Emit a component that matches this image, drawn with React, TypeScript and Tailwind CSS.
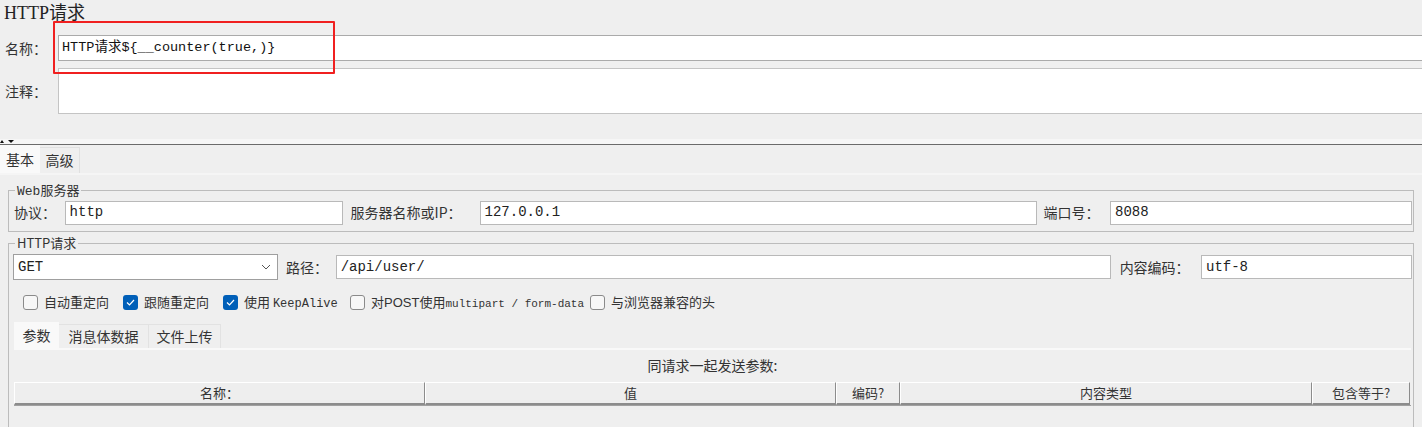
import React from "react";

const cjk = '"Noto Sans CJK SC", "Noto Sans", sans-serif';
const mono = '"Liberation Mono", "Noto Sans CJK SC", monospace';

function Field({ w, value, h = 24 }: { w: number; value: string; h?: number }) {
  return (
    <div
      className="flex items-center bg-white border border-[#b9b9b9] pl-[4px] text-[14px] text-[#222] shrink-0"
      style={{ width: w, height: h, fontFamily: mono }}
    >
      {value}
    </div>
  );
}

function Check({ checked, children }: { checked?: boolean; children: React.ReactNode }) {
  return (
    <div className="flex items-center gap-[6px] text-[13px] text-[#333] whitespace-nowrap">
      {checked ? (
        <div className="w-[15px] h-[15px] rounded-[3px] bg-[#005fb8] flex items-center justify-center shrink-0">
          <svg width="9" height="7" viewBox="0 0 9 7">
            <path d="M1 3.5 L3.5 6 L8 1" stroke="white" strokeWidth="1.2" fill="none" />
          </svg>
        </div>
      ) : (
        <div className="w-[15px] h-[15px] rounded-[3px] border border-[#8a8a8a] bg-[#f7f7f7] shrink-0" />
      )}
      <span style={{ fontFamily: cjk }}>{children}</span>
    </div>
  );
}

function HeadCell({ w, children }: { w: number; children: React.ReactNode }) {
  return (
    <div
      className="h-[23px] flex items-center justify-center border-t border-l border-t-white border-l-white border-r border-b-2 border-r-[#8c8c8c] border-b-[#8c8c8c] bg-[#eeeeee] text-[13px] text-[#333] shrink-0"
      style={{ width: w, fontFamily: cjk }}
    >
      {children}
    </div>
  );
}

export default function App() {
  return (
    <div className="relative w-[1422px] h-[427px] overflow-hidden bg-[#efefef]" style={{ fontFamily: cjk }}>
      {/* Title */}
      <div className="h-[28px] pl-[4px] pt-[1px] text-[18px] leading-[24px] text-[#222]" style={{ fontFamily: '"Liberation Serif", "Noto Sans CJK SC", serif' }}>
        HTTP请求
      </div>
      {/* name */}
      <div className="flex items-center h-[26px] mt-[7px]">
        <div className="w-[58px] pl-[5px] text-[14px] text-[#333]">名称：</div>
        <div
          className="flex-1 h-[26px] bg-white border border-[#aaaaaa] border-r-0 flex items-center pl-[3px] text-[13.5px] text-[#111]"
          style={{ fontFamily: mono }}
        >
          HTTP请求$&#123;__counter(true,)&#125;
        </div>
      </div>
      {/* comment */}
      <div className="flex h-[46px] mt-[7px]">
        <div className="w-[58px] pl-[5px] text-[14px] text-[#333] flex items-center">注释：</div>
        <div className="flex-1 bg-white border border-[#c4c4c4] border-r-0" />
      </div>
      {/* splitter */}
      <div className="h-[25px]" />
      <div className="relative h-[5px] bg-[#f6f6f6]">
        <svg className="absolute left-[0px] top-[0px]" width="16" height="5" viewBox="0 0 16 5">
          <path d="M0 4 L2 1 L4 4 Z" fill="#111" />
          <path d="M8 1 L14 1 L11 4 Z" fill="#111" />
        </svg>
      </div>
      <div className="h-[1px] bg-[#6b6b6b]" />
      {/* tabs */}
      <div className="flex h-[28px] items-end">
        <div className="w-[40px] h-[28px] bg-[#f9f9f9] flex items-center justify-center text-[14px] text-[#333]">基本</div>
        <div className="w-[40px] h-[26px] border-t border-r border-[#e0e0e0] flex items-center justify-center text-[14px] text-[#333]">高级</div>
      </div>
      <div className="h-[2px] bg-[#f5f5f5]" />
      {/* Web server fieldset */}
      <div className="pt-[15px] px-[8px]">
        <div className="relative border border-[#bcbcbc] h-[42px] pl-[5px] pr-[1px] flex items-center">
          <div className="absolute -top-[10px] left-[6px] px-[2px] bg-[#efefef] text-[13px] leading-[18px] text-[#333]">
            <span style={{ fontFamily: mono }}>Web</span>服务器
          </div>
          <div className="flex items-center w-full mt-[3px]">
            <div className="w-[51px] text-[14px] text-[#333]">协议：</div>
            <Field w={278} value="http" />
            <div className="w-[138px] pl-[8px] text-[14px] text-[#333]">服务器名称或<span>IP</span>：</div>
            <Field w={557} value="127.0.0.1" />
            <div className="w-[74px] pl-[7px] text-[14px] text-[#333]">端口号：</div>
            <Field w={302} value="8088" />
          </div>
        </div>
      </div>
      {/* HTTP request fieldset */}
      <div className="pt-[11px] px-[8px]">
        <div className="relative border border-[#bcbcbc] border-b-0 h-[200px] pl-[4px] pr-[1px]">
          <div className="absolute -top-[10px] left-[6px] px-[2px] bg-[#efefef] text-[13px] leading-[18px] text-[#333]">
            <span>HTTP</span>请求
          </div>
          <div className="flex items-center mt-[10px]">
            <div
              className="w-[265px] h-[26px] bg-white border border-[#9f9f9f] flex items-center justify-between pl-[4px] pr-[6px] text-[14px] text-[#222] shrink-0"
              style={{ fontFamily: mono }}
            >
              <span>GET</span>
              <svg width="10" height="6" viewBox="0 0 10 6">
                <path d="M1 1 L5 5 L9 1" stroke="#555" strokeWidth="1" fill="none" />
              </svg>
            </div>
            <div className="w-[58px] pl-[8px] text-[14px] text-[#333]">路径：</div>
            <Field w={775} value="/api/user/" />
            <div className="w-[91px] pl-[9px] text-[14px] text-[#333]">内容编码：</div>
            <Field w={211} value="utf-8" />
          </div>
          <div className="flex items-center h-[20px] mt-[12px] pl-[10px]">
            <div className="w-[100px]"><Check>自动重定向</Check></div>
            <div className="w-[100px]"><Check checked>跟随重定向</Check></div>
            <div className="w-[127px]">
              <Check checked>
                使用 <span style={{ fontFamily: mono }} className="text-[12px]">KeepAlive</span>
              </Check>
            </div>
            <div className="w-[240px]">
              <Check>
                对<span style={{ fontFamily: '"Liberation Sans", sans-serif' }} className="text-[13px]">POST</span>使用<span style={{ fontFamily: mono }} className="text-[11px]">multipart / form-data</span>
              </Check>
            </div>
            <Check>与浏览器兼容的头</Check>
          </div>
          {/* inner tabs */}
          <div className="flex items-end h-[26px] mt-[10px] pl-[1px]">
            <div className="w-[45px] h-[26px] bg-[#f9f9f9] flex items-center justify-center text-[14px] text-[#333]">参数</div>
            <div className="w-[90px] h-[24px] border-t border-r border-[#e2e2e2] flex items-center justify-center text-[14px] text-[#333]">消息体数据</div>
            <div className="w-[72px] h-[24px] border-t border-r border-[#e2e2e2] flex items-center justify-center text-[14px] text-[#333]">文件上传</div>
          </div>
          <div className="ml-[1px] mr-[1px] border-t-2 border-[#f9f9f9] bg-[#efefef]">
            <div className="h-[30px] flex items-center justify-center text-[14px] text-[#333]">同请求一起发送参数:</div>
            <div className="flex mt-[2px] border-b border-[#a0a0a0]">
              <HeadCell w={411}>名称：</HeadCell>
              <HeadCell w={411}>值</HeadCell>
              <HeadCell w={64}>编码?</HeadCell>
              <HeadCell w={412}>内容类型</HeadCell>
              <HeadCell w={98}>包含等于?</HeadCell>
            </div>
          </div>
        </div>
      </div>
      {/* annotation */}
      <div className="absolute left-[53px] top-[21px] w-[282px] h-[53px] border-2 border-[#f02020] rounded-[1px]" />
    </div>
  );
}
